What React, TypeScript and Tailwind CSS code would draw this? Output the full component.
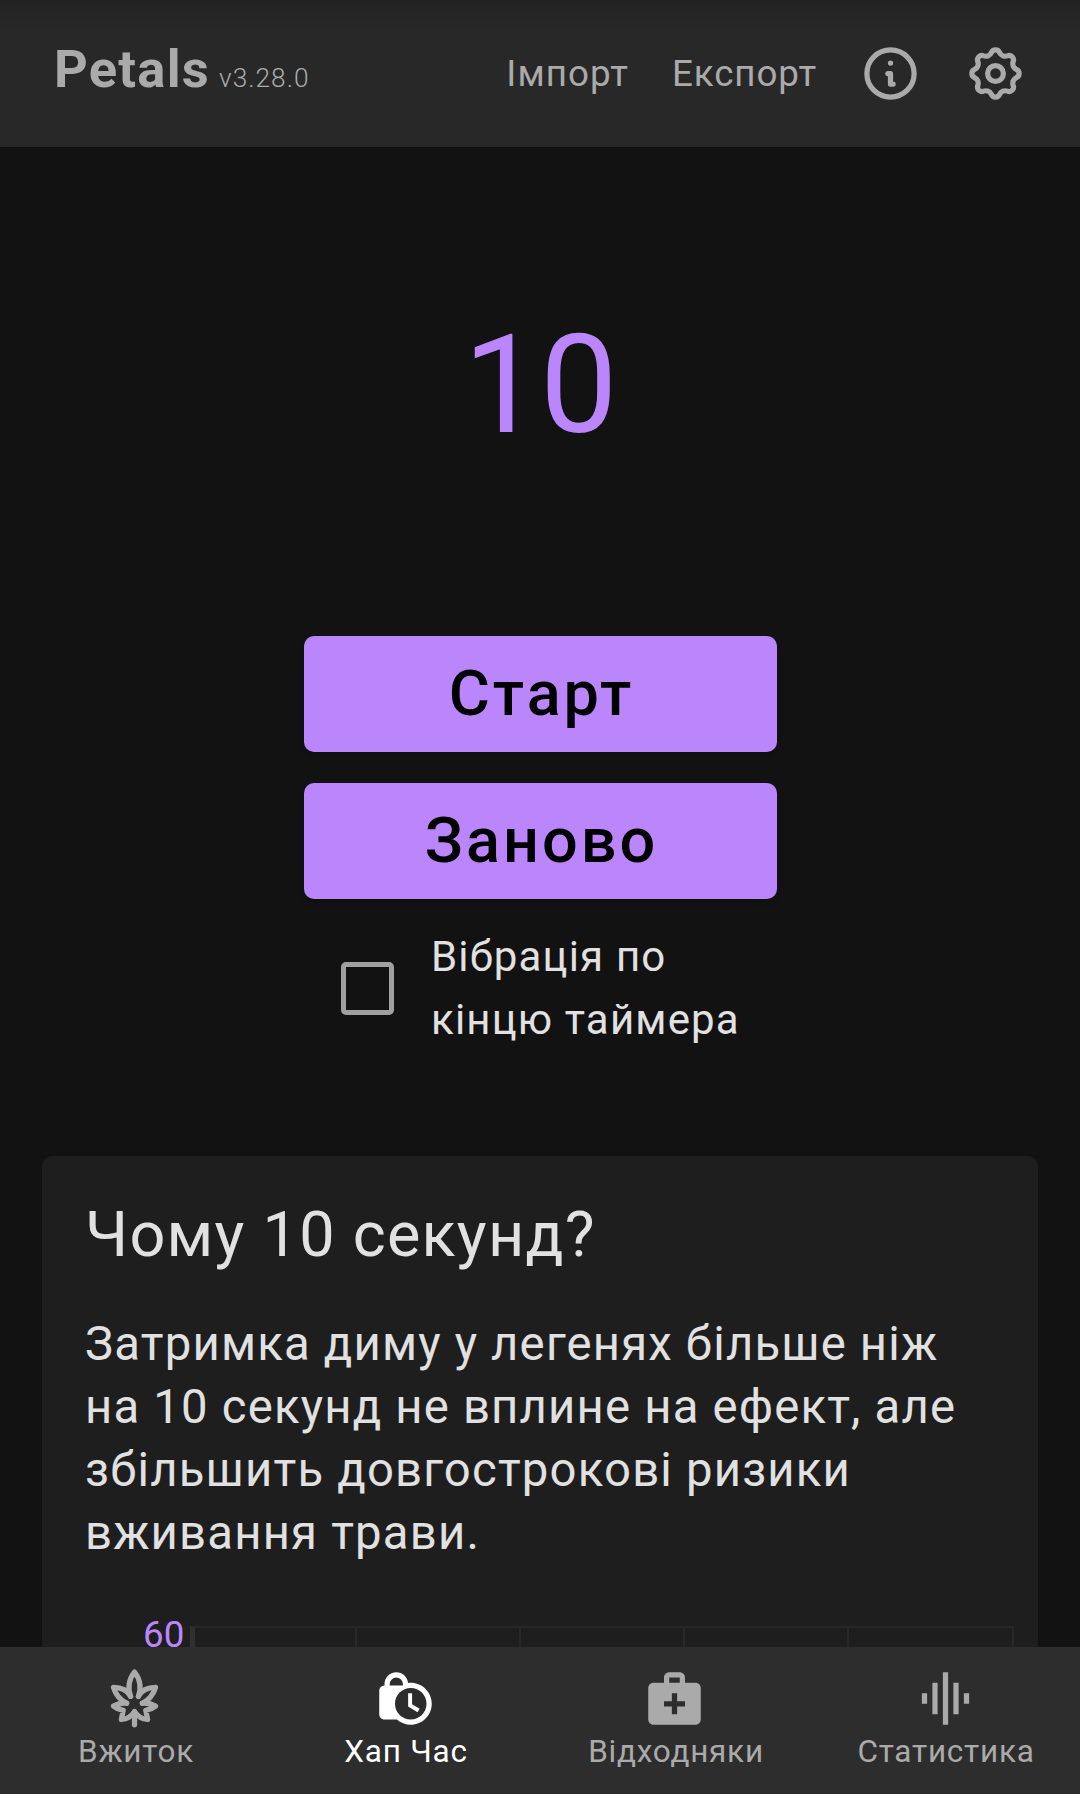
import { MdLockClock, MdMedicalServices, MdGraphicEq } from "react-icons/md";

function InfoIcon() {
  return (
    <svg viewBox="0 0 24 24" className="size-[63px]" fill="none" stroke="#aaaaaa" strokeWidth="2" strokeLinecap="round" strokeLinejoin="round">
      <path d="M13 16h-1v-4h-1m1-4h.01M21 12a9 9 0 11-18 0 9 9 0 0118 0z" />
    </svg>
  );
}

// Eight rounded teeth: each tooth is a convex arc, joined to the next by a shallow concave one.
const GEAR_PATH = (() => {
  const at = (deg: number) => {
    const a = (deg * Math.PI) / 180;
    return `${(12 + 8.1 * Math.sin(a)).toFixed(3)} ${(12 - 8.1 * Math.cos(a)).toFixed(3)}`;
  };
  let d = `M${at(-11)}`;
  for (let i = 0; i < 8; i++) {
    d += `A1.66 1.66 0 0 1 ${at(i * 45 + 11)}A2.47 2.47 0 0 0 ${at(i * 45 + 34)}`;
  }
  return `${d}Z`;
})();

function GearIcon() {
  return (
    <svg viewBox="0 0 24 24" className="size-[63px]" fill="none" stroke="#aaaaaa" strokeWidth="2" strokeLinejoin="round">
      <path d={GEAR_PATH} />
      <circle cx="12" cy="12" r="3" />
    </svg>
  );
}

function LeafIcon() {
  return (
    <svg viewBox="0 0 24 24" className="mr-[2px] size-[63px]" fill="none" stroke="#aaaaaa" strokeWidth="2" strokeLinecap="round" strokeLinejoin="round">
      <path d="M10.5 11.2C9.4 8 9.9 4.6 12 1.9C14.1 4.6 14.6 8 13.5 11.2" />
      <path d="M10.5 11.2C9.3 8.9 6.8 7.8 4 7.8C4.8 10.4 6.6 12.6 9 13.8" />
      <path d="M13.5 11.2C14.7 8.9 17.2 7.8 20 7.8C19.2 10.4 17.4 12.6 15 13.8" />
      <path d="M9 13.8C7.1 13.6 5.5 14 4 14.9C5.1 15.8 6.3 16.3 7.7 16.5L7 20C9 19.9 10.8 18.8 12 17C13.2 18.8 15 19.9 17 20L16.3 16.5C17.7 16.3 18.9 15.8 20 14.9C18.5 14 16.9 13.6 15 13.8" />
      <path d="M12 17V22" />
    </svg>
  );
}

const TABS = [
  { label: "Вжиток", icon: <LeafIcon />, active: false },
  { label: "Хап Час", icon: <MdLockClock className="size-[63px]" />, active: true },
  { label: "Відходняки", icon: <MdMedicalServices className="mr-[2px] size-[63px]" />, active: false },
  { label: "Статистика", icon: <MdGraphicEq className="size-[63px]" />, active: false },
];

export default function App() {
  return (
    <div className="flex h-[1794px] w-[1080px] flex-col overflow-hidden bg-[#121212] font-['Roboto',sans-serif] text-[#e1e1e1]">
      <header className="flex h-[147px] shrink-0 items-center bg-[#282828] bg-linear-to-b from-[#222222] to-[#282828] to-20% pr-[53px] pl-[54px] text-[#aaaaaa]">
        <div className="flex items-baseline pb-[8px]">
          <span className="text-[52.5px] leading-none font-bold tracking-[1.25px]">Petals</span>
          <span className="ml-[9px] text-[26.25px] leading-none font-light tracking-[1px]">v3.28.0</span>
        </div>
        <nav className="ml-auto flex items-center">
          <button className="mr-[43px] pt-[2px] text-[36.75px] leading-none tracking-[1.05px]">Імпорт</button>
          <button className="mr-[42px] pt-[2px] text-[36.75px] leading-none tracking-[0.9px]">Експорт</button>
          <span className="mr-[42px]"><InfoIcon /></span>
          <GearIcon />
        </nav>
      </header>

      <main className="flex min-h-0 flex-1 flex-col items-center overflow-hidden">
        <div className="mt-[157px] text-[138px] leading-[162px] tracking-[-0.8px] text-[#bb86fc]">10</div>
        <div className="mt-[170px] flex w-[473px] flex-col gap-[31px]">
          <button className="h-[116px] rounded-[10px] bg-[#bb86fc] pb-[2px] pl-[3px] text-[63px] leading-none font-medium tracking-[3px] text-black shadow-md">Старт</button>
          <button className="h-[116px] rounded-[10px] bg-[#bb86fc] pb-[2px] pl-[3px] text-[63px] leading-none font-medium tracking-[3px] text-black shadow-md">Заново</button>
        </div>
        <label className="mt-[26px] flex w-[398px] shrink-0 items-center">
          <span className="size-[53px] shrink-0 rounded-[5px] border-5 border-[#a0a0a0]" />
          <span className="ml-[37px] text-[42px] leading-[63px] tracking-[1.18px] whitespace-nowrap">
            Вібрація по<br />кінцю таймера
          </span>
        </label>
        <section className="mt-[105px] h-[700px] w-[996px] shrink-0 rounded-t-[10px] bg-[#1e1e1e] px-[43px] pt-[42px]">
          <h1 className="text-[63px] leading-[74px] tracking-[1.25px]">Чому 10 секунд?</h1>
          <p className="mt-[41px] text-[47.25px] leading-[63px] tracking-[1.2px] whitespace-nowrap">
            Затримка диму у легенях більше ніж<br />
            на 10 секунд не вплине на ефект, але<br />
            збільшить довгострокові ризики<br />
            вживання трави.
          </p>
          <div className="mt-[46px] ml-[58px] flex">
            <span className="mt-[2px] w-[47px] shrink-0 text-[36.75px] leading-[43px] text-[#bb86fc]">60</span>
            <div className="mt-[15px] grid h-[300px] w-[824px] shrink-0 grid-cols-[162px_164px_164px_164px_1fr] border-t-2 border-r-2 border-l-5 border-t-[#282828] border-r-[#282828] border-l-[#303030]">
              <span className="border-r-2 border-[#282828]" />
              <span className="border-r-2 border-[#282828]" />
              <span className="border-r-2 border-[#282828]" />
              <span className="border-r-2 border-[#282828]" />
            </div>
          </div>
        </section>
      </main>

      <footer className="grid h-[147px] shrink-0 grid-cols-4 bg-[#2d2d2d]">
        {TABS.map((tab) => (
          <button key={tab.label} className={`flex flex-col items-center pt-[20px] ${tab.active ? "text-white" : "text-[#aaaaaa]"}`}>
            {tab.icon}
            <span className="mt-[3px] pl-[2px] text-[31.5px] leading-[37px] tracking-[0.75px]">{tab.label}</span>
          </button>
        ))}
      </footer>
    </div>
  );
}
